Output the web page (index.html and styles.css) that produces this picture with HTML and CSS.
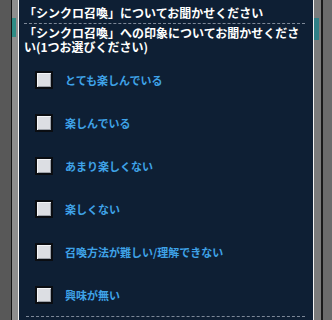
FILE: index.html
```html
<!DOCTYPE html>
<html lang="ja">
<head>
<meta charset="utf-8">
<title>アンケート</title>
<link rel="stylesheet" href="styles.css">
</head>
<body>
<div class="screen">
  <div class="bg-left"></div>
  <div class="bg-edge"></div>
  <div class="bg-page"><div class="bg-btn"></div></div>
  <div class="frame-line"></div>
  <div class="panel">
    <div class="title-main">「シンクロ召喚」についてお聞かせください</div>
    <div class="title-sub">「シンクロ召喚」への印象についてお聞かせください(1つお選びください)</div>
    <ul class="options">
      <li class="option"><span class="box"></span><span class="label">とても楽しんでいる</span></li>
      <li class="option"><span class="box"></span><span class="label">楽しんでいる</span></li>
      <li class="option"><span class="box"></span><span class="label">あまり楽しくない</span></li>
      <li class="option"><span class="box"></span><span class="label">楽しくない</span></li>
      <li class="option"><span class="box"></span><span class="label">召喚方法が難しい/理解できない</span></li>
      <li class="option"><span class="box"></span><span class="label">興味が無い</span></li>
    </ul>
  </div>
  <div class="frame-line"></div>
  <div class="bg-page-r"><div class="bg-btn-r"></div></div>
  <div class="bg-edge-r"></div>
  <div class="bg-right"></div>
</div>
</body>
</html>
```

FILE: styles.css
```css
html, body {
  margin: 0;
  padding: 0;
}
body {
  background: #5a5a5a;
  font-family: "Noto Sans CJK JP", "Noto Sans", sans-serif;
}
.screen {
  display: flex;
  width: 332px;
  height: 320px;
  overflow: hidden;
}
.bg-left {
  width: 11px;
  background: #585858;
}
.bg-edge {
  width: 1px;
  background: #141414;
}
.bg-page {
  width: 6px;
  background: #8e8e8e;
}
.bg-btn {
  margin-top: 18px;
  width: 4px;
  height: 19px;
  background: #2f8c86;
}
.frame-line {
  width: 1px;
  background: #f2f2f2;
}
.panel {
  width: 294px;
  background: #0e1f34;
  padding: 0 8px 0 5px;
  box-sizing: border-box;
  color: #ffffff;
}
.title-main {
  font-size: 12px;
  font-weight: bold;
  line-height: 15px;
  padding-top: 5px;
  padding-bottom: 3px;
  white-space: nowrap;
  border-bottom: 1px dashed #7d8898;
  margin-left: 0;
}
.title-sub {
  font-size: 12px;
  font-weight: bold;
  line-height: 14px;
  padding-top: 2px;
}
.options {
  list-style: none;
  margin: 0 0 0 2px;
  padding: 4px 0 0 0;
  border-bottom: 1px dashed #7d8898;
}
.option {
  display: flex;
  align-items: center;
  height: 43px;
  padding-left: 9px;
}
.box {
  width: 18px;
  height: 18px;
  box-sizing: border-box;
  background: #dcdee3;
  border: 2px solid #0a0d12;
  box-shadow: inset 1px 1px 0 #f4f5f7, inset -1px -1px 0 #9ea2a9;
  flex: none;
}
.label {
  margin-left: 12px;
  font-size: 11px;
  font-weight: bold;
  color: #3fa3e8;
  line-height: 14px;
  white-space: nowrap;
}
.bg-page-r {
  width: 7px;
  background: #7b7b7b;
}
.bg-btn-r {
  margin-top: 18px;
  width: 5px;
  height: 22px;
  background: #2f7f86;
}
.bg-edge-r {
  width: 2px;
  background: #1a1a1a;
}
.bg-right {
  flex: 1;
  background: #6c6c6c;
}
```
